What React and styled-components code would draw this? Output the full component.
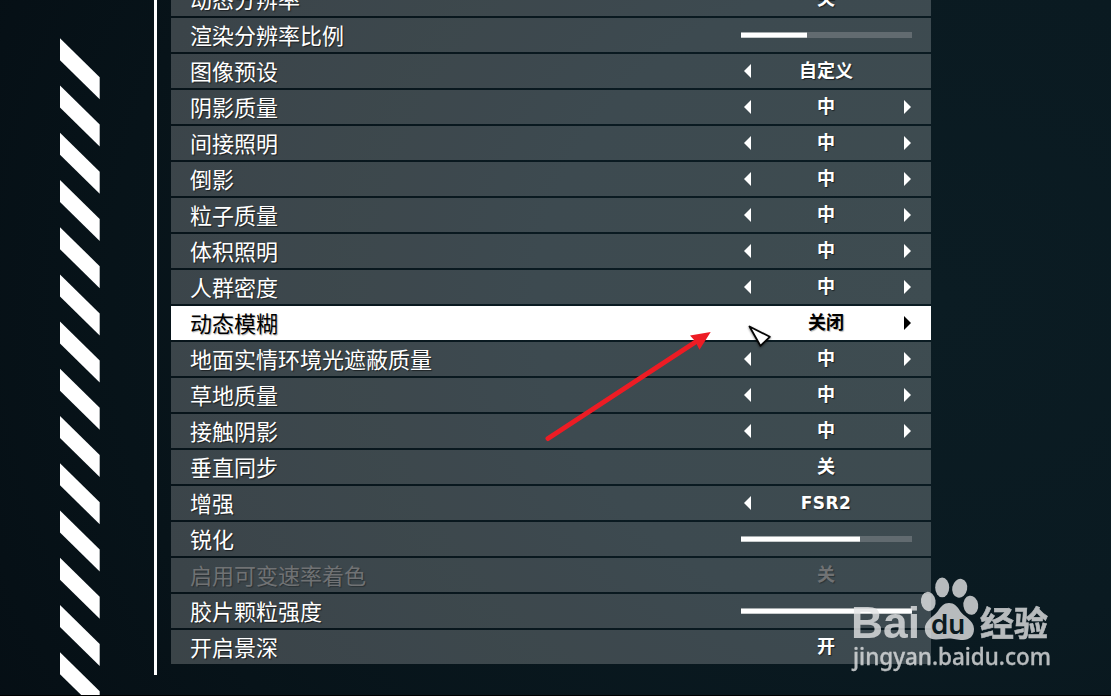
import styled, { createGlobalStyle } from "styled-components";

const settings = [
  { label: "动态分辨率", value: "关" },
  { label: "渲染分辨率比例", slider: 66 },
  { label: "图像预设", value: "自定义", prev: true },
  { label: "阴影质量", value: "中", prev: true, next: true },
  { label: "间接照明", value: "中", prev: true, next: true },
  { label: "倒影", value: "中", prev: true, next: true },
  { label: "粒子质量", value: "中", prev: true, next: true },
  { label: "体积照明", value: "中", prev: true, next: true },
  { label: "人群密度", value: "中", prev: true, next: true },
  { label: "动态模糊", value: "关闭", next: true, active: true },
  { label: "地面实情环境光遮蔽质量", value: "中", prev: true, next: true },
  { label: "草地质量", value: "中", prev: true, next: true },
  { label: "接触阴影", value: "中", prev: true, next: true },
  { label: "垂直同步", value: "关" },
  { label: "增强", value: "FSR2", prev: true, latin: true },
  { label: "锐化", slider: 119 },
  { label: "启用可变速率着色", value: "关", disabled: true },
  { label: "胶片颗粒强度", slider: 171 },
  { label: "开启景深", value: "开" },
];

const stripes = Array.from({ length: 14 }, (_, i) => 38.3 + i * 47.22);

export default function App() {
  return (
    <>
      <GlobalStyle />
      <Screen>
        <StripeColumn>
          <svg width="40" height="695" viewBox="0 0 40 695">
            {stripes.map((y) => (
              <path key={y} d={`M0 ${y}L39.7 ${y + 39}v22L0 ${y + 22}z`} fill="#fff" />
            ))}
          </svg>
        </StripeColumn>
        <Divider />
        <SettingsList>
          {settings.map((item) => (
            <SettingRow key={item.label} $active={item.active} $disabled={item.disabled}>
              <Label>{item.label}</Label>
              {item.slider ? (
                <Track>
                  <Fill style={{ width: item.slider }} />
                </Track>
              ) : (
                <Picker>
                  <Arrow $hidden={!item.prev} viewBox="0 0 7 14">
                    <path d="M7 0v14L0 7z" />
                  </Arrow>
                  <Value $latin={item.latin}>{item.value}</Value>
                  <Arrow $hidden={!item.next} viewBox="0 0 7 14">
                    <path d="M0 0v14l7-7z" />
                  </Arrow>
                </Picker>
              )}
            </SettingRow>
          ))}
        </SettingsList>
        <Pointer />
        <Cursor />
        <Watermark />
      </Screen>
    </>
  );
}

function Pointer() {
  return (
    <PointerSvg width="170" height="115" viewBox="0 0 170 115">
      <path d="M8 108.5 157 11" stroke="#ed1c24" strokeWidth="5" strokeLinecap="round" />
      <path d="M170.7 2 150 5.5l5 5.5 4.5 8.8z" fill="#ed1c24" />
    </PointerSvg>
  );
}

function Cursor() {
  return (
    <CursorSvg width="28" height="28" viewBox="0 0 28 28">
      <path d="M4.5 4.5 24.8 14.8 15.4 23.8z" fill="#fff" stroke="#050505" strokeWidth="1.8" strokeLinejoin="round" />
    </CursorSvg>
  );
}

function Watermark() {
  return (
    <WatermarkSvg width="210" height="106" viewBox="850 570 210 106">
      <g fill="#e3e4e5" opacity="0.8">
        <text x="851" y="638" fontFamily="Liberation Sans" fontWeight="700" fontSize="44" textLength="69" lengthAdjust="spacingAndGlyphs">
          Bai
        </text>
        <ellipse cx="928.3" cy="601.5" rx="7.3" ry="9.7" transform="rotate(-8 928.3 601.5)" />
        <ellipse cx="942.2" cy="587.4" rx="7" ry="9.9" />
        <ellipse cx="959.7" cy="588.3" rx="7.5" ry="9.5" transform="rotate(12 959.7 588.3)" />
        <ellipse cx="970.8" cy="605.3" rx="7.4" ry="9.6" transform="rotate(-8 970.8 605.3)" />
        <path d="M949 603C954 603 957.5 606.5 960 611C963 616 974 620 974 629C974 636 969.5 640 963 640C957 640 954 638.5 949 638.5C944 638.5 941 639.5 936 639.5C929 639.5 924.8 635 924.8 628.5C924.8 620.5 934 616.5 938 611C941 606.5 944 603 949 603z" />
        <text x="980" y="636" fontFamily="Noto Sans CJK SC" fontWeight="700" fontSize="34" stroke="#e3e4e5" strokeWidth="0.6" textLength="68" lengthAdjust="spacingAndGlyphs">
          经验
        </text>
        <text x="853" y="664.5" fontFamily="Noto Sans" fontWeight="500" fontSize="23.5" stroke="#e3e4e5" strokeWidth="0.3" textLength="198" lengthAdjust="spacingAndGlyphs">
          jingyan.baidu.com
        </text>
      </g>
      <text x="931" y="633.5" fill="#0b1a20" fontFamily="Inter" fontWeight="600" fontSize="27" textLength="34" lengthAdjust="spacingAndGlyphs">
        du
      </text>
    </WatermarkSvg>
  );
}

const GlobalStyle = createGlobalStyle`
  * {
    box-sizing: border-box;
  }
  body {
    margin: 0;
    overflow: hidden;
    background: #02070a;
  }
`;

const Screen = styled.div`
  position: relative;
  display: flex;
  width: 1111px;
  height: 696px;
  overflow: hidden;
  border-bottom: 1px solid #000;
  background: radial-gradient(ellipse 1150px 950px at 940px 300px, #0b1c23 0%, #0a1a21 35%, #071319 72%, #050d13 100%);
  font-family: "Noto Sans CJK SC", sans-serif;
`;

const StripeColumn = styled.div`
  width: 94px;
  margin-left: 60px;
  svg {
    display: block;
  }
`;

const Divider = styled.div`
  width: 3px;
  height: 675px;
  background-color: #fff;
`;

const SettingsList = styled.div`
  display: flex;
  flex-direction: column;
  gap: 2px;
  width: 760px;
  margin: -18px 0 0 14px;
`;

const SettingRow = styled.div`
  display: flex;
  flex-shrink: 0;
  justify-content: space-between;
  align-items: center;
  height: 34px;
  padding: 0 19px;
  background-color: ${(p) => (p.$active ? "#fff" : "rgba(255, 255, 255, 0.21)")};
  color: ${(p) => (p.$active ? "#000" : p.$disabled ? "#707274" : "#fff")};
  text-shadow: 1px 1px 1px ${(p) => (p.$active || p.$disabled ? "rgba(0, 0, 0, 0.3)" : "rgba(0, 0, 0, 0.55)")};
`;

const Label = styled.span`
  padding-bottom: 3px;
  font-size: 22px;
  line-height: 30px;
  white-space: nowrap;
`;

const Picker = styled.div`
  display: flex;
  justify-content: space-between;
  align-items: center;
  width: 167px;
  margin-right: 1px;
`;

const Arrow = styled.svg`
  width: 7px;
  height: 14px;
  fill: currentColor;
  visibility: ${(p) => (p.$hidden ? "hidden" : "visible")};
`;

const Value = styled.span`
  margin-left: -3px;
  padding-bottom: ${(p) => (p.$latin ? "1px" : "4px")};
  font-family: ${(p) => (p.$latin ? '"DejaVu Sans", sans-serif' : "inherit")};
  font-size: ${(p) => (p.$latin ? "17px" : "18px")};
  font-weight: 700;
  line-height: 30px;
  letter-spacing: ${(p) => (p.$latin ? "0.4px" : "0")};
`;

const Track = styled.div`
  width: 171px;
  height: 6px;
  background-color: #626b70;
`;

const Fill = styled.div`
  height: 100%;
  border-top: 1px solid #a5abad;
  border-bottom: 1px solid #c8cccd;
  background-color: #fff;
`;

const PointerSvg = styled.svg`
  position: absolute;
  left: 540px;
  top: 330px;
  fill: none;
  overflow: visible;
`;

const CursorSvg = styled.svg`
  position: absolute;
  left: 745px;
  top: 322px;
  filter: drop-shadow(0 1px 1px rgba(0, 0, 0, 0.5));
`;

const WatermarkSvg = styled.svg`
  position: absolute;
  left: 850px;
  top: 570px;
`;
